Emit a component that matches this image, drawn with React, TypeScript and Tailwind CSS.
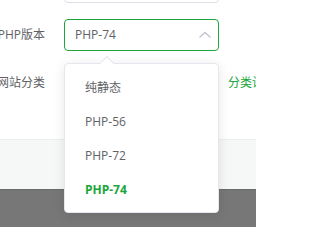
import React from 'react';

const font = { fontFamily: '"Open Sans", "Noto Sans CJK SC", sans-serif' };

const options = ['纯静态', 'PHP-56', 'PHP-72', 'PHP-74'];

function FormRow({ label, children }: { label: string; children: React.ReactNode }) {
  return (
    <div className="flex h-8 items-center">
      <div className="flex w-[45px] shrink-0 justify-end whitespace-nowrap text-xs text-[#606266]">
        <span>{label}</span>
      </div>
      <div className="ml-[19px] flex items-center">{children}</div>
    </div>
  );
}

export default function App() {
  const selected = 'PHP-74';

  return (
    <div className="relative h-[227px] w-[256px] overflow-hidden bg-[#777777]" style={font}>
      {/* Form area */}
      <div className="h-[140px] overflow-hidden border-b border-[#ebeef0] bg-white">
        <div className="mt-[-29px] flex flex-col gap-4">
          <FormRow label="">
            <div className="h-8 w-[155px] rounded border border-[#dcdfe6]" />
          </FormRow>
          <FormRow label="PHP版本">
            <div className="flex h-8 w-[155px] items-center justify-between rounded border border-[#20a53a] pl-[10px] pr-[5px]">
              <span className="text-xs text-[#606266]">{selected}</span>
              <svg width="14" height="8" viewBox="0 0 14 8" className="mr-[1px]">
                <path d="M1.5 6.5 L7 1.5 L12.5 6.5" fill="none" stroke="#c0c4cc" strokeWidth="1.3" />
              </svg>
            </div>
          </FormRow>
          <FormRow label="网站分类">
            <div className="h-8 w-[155px] shrink-0 rounded border border-[#dcdfe6]" />
            <span className="ml-[9px] whitespace-nowrap text-xs text-[#20a53a]">分类设置</span>
          </FormRow>
        </div>
      </div>

      {/* Footer */}
      <div className="h-[50px] border-b border-[#6a6a6a] bg-[#f6f8f8]" />

      {/* Dropdown */}
      <div className="absolute left-[64px] top-[63px] w-[155px] rounded border border-[#e4e7ed] bg-white pb-[5px] pt-[7px] shadow-[0_2px_12px_0_rgba(0,0,0,0.1)]">
        <div className="absolute left-[37px] top-[-6px] h-[10px] w-[10px] rotate-45 border-l border-t border-[#e4e7ed] bg-white" />
        {options.map((opt) => (
          <div
            key={opt}
            className={`flex h-[34px] items-center px-5 text-xs ${
              opt === selected ? 'font-bold text-[#20a53a]' : 'text-[#606266]'
            }`}
          >
            {opt}
          </div>
        ))}
      </div>
    </div>
  );
}
